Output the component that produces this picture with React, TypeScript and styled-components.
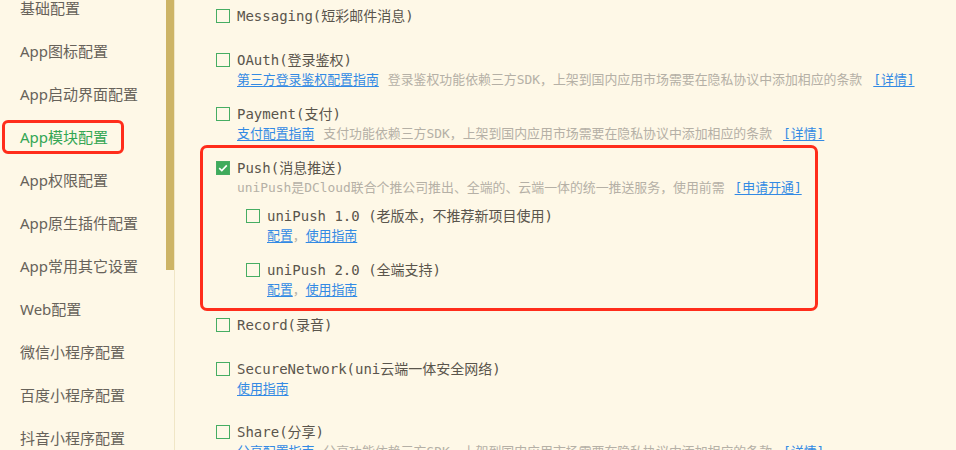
import styled, { createGlobalStyle } from "styled-components";

const GlobalStyle = createGlobalStyle`
  html, body {
    margin: 0;
    padding: 0;
    background: #fef8e7;
  }
  body {
    font-family: "Noto Sans", "Noto Sans CJK SC", sans-serif;
  }
`;

const Page = styled.div`
  display: flex;
  height: 450px;
  overflow: hidden;
  background: #fef8e7;
`;

const Sidebar = styled.nav`
  width: 166px;
  flex-shrink: 0;
  overflow: hidden;
`;

const MenuList = styled.ul`
  list-style: none;
  margin: -14px 0 0;
  padding: 0;
`;

const MenuItem = styled.li`
  height: 43px;
  display: flex;
  align-items: center;
`;

const MenuLabel = styled.span<{ $active?: boolean }>`
  display: inline-flex;
  align-items: center;
  box-sizing: border-box;
  height: 34px;
  margin-left: 2px;
  padding: 0 13px 0 15px;
  border: 3px solid ${(p) => (p.$active ? "#ff2d1b" : "transparent")};
  border-radius: 6px;
  font-size: 15px;
  color: ${(p) => (p.$active ? "#33a653" : "#67625a")};
  white-space: nowrap;
`;

const ScrollTrack = styled.div`
  width: 8px;
  flex-shrink: 0;
  border-right: 1px solid #f0e6c6;
`;

const ScrollThumb = styled.div`
  height: 270px;
  background: #cdb466;
`;

const Content = styled.main`
  flex: 1;
  overflow: hidden;
  padding-left: 41px;
`;

const OptionList = styled.div`
  display: flex;
  flex-direction: column;
  margin-top: 6px;
`;

const Option = styled.div<{ $tight?: boolean; $marked?: boolean }>`
  position: relative;
  display: grid;
  grid-template-columns: 14px 1fr;
  column-gap: 7px;
  align-items: start;
  margin-bottom: ${(p) => (p.$tight ? 15 : 24)}px;

  ${(p) =>
    p.$marked &&
    `
    &::after {
      content: "";
      position: absolute;
      top: -13px;
      bottom: -11px;
      left: -16px;
      width: 618px;
      box-sizing: border-box;
      border: 3px solid #ff2d1b;
      border-radius: 7px;
      pointer-events: none;
    }
  `}
`;

const SubList = styled.div`
  display: flex;
  flex-direction: column;
  gap: 14px;
  margin: 9px 0 0 9px;
`;

const SubOption = styled.div`
  display: grid;
  grid-template-columns: 14px 1fr;
  column-gap: 7px;
  align-items: start;
`;

const Check = styled.span<{ $checked?: boolean }>`
  box-sizing: border-box;
  width: 14px;
  height: 14px;
  margin-top: 3px;
  border: 1px solid #46ad63;
  background: ${(p) => (p.$checked ? "#3fab5c" : "transparent")};
  display: flex;
  align-items: center;
  justify-content: center;
`;

const Body = styled.div`
  min-width: 0;
`;

const Title = styled.div`
  font-family: "DejaVu Sans Mono", "Noto Sans CJK SC", monospace;
  font-size: 14px;
  line-height: 20px;
  color: #5a554c;
  white-space: nowrap;
`;

const Desc = styled.div<{ $line?: number }>`
  font-family: "DejaVu Sans Mono", "Noto Sans CJK SC", monospace;
  font-size: 12.9px;
  line-height: ${(p) => p.$line ?? 19}px;
  color: #b5b0a6;
  white-space: nowrap;
`;

const Link = styled.a<{ $gap?: number }>`
  color: #338ae4;
  text-decoration: underline;
  text-underline-offset: 2px;
  margin-left: ${(p) => p.$gap ?? 0}px;
  cursor: pointer;
`;

const Note = styled.span`
  margin-left: 9px;
`;

const Tick = () => (
  <svg width="10" height="8" viewBox="0 0 10 8">
    <path d="M1.2 4.2 L3.8 6.6 L8.8 1.4" fill="none" stroke="#fff" strokeWidth="1.6" />
  </svg>
);

const menu = [
  "基础配置",
  "App图标配置",
  "App启动界面配置",
  "App模块配置",
  "App权限配置",
  "App原生插件配置",
  "App常用其它设置",
  "Web配置",
  "微信小程序配置",
  "百度小程序配置",
  "抖音小程序配置",
];

const privacy = "上架到国内应用市场需要在隐私协议中添加相应的条款";

export default function App() {
  return (
    <>
      <GlobalStyle />
      <Page>
        <Sidebar>
          <MenuList>
            {menu.map((m) => (
              <MenuItem key={m}>
                <MenuLabel $active={m === "App模块配置"}>{m}</MenuLabel>
              </MenuItem>
            ))}
          </MenuList>
        </Sidebar>
        <ScrollTrack>
          <ScrollThumb />
        </ScrollTrack>

        <Content>
          <OptionList>
            <Option>
              <Check />
              <Body>
                <Title>Messaging(短彩邮件消息)</Title>
              </Body>
            </Option>

            <Option $tight>
              <Check />
              <Body>
                <Title>OAuth(登录鉴权)</Title>
                <Desc>
                  <Link>第三方登录鉴权配置指南</Link>
                  <Note>登录鉴权功能依赖三方SDK，{privacy}</Note>
                  <Link $gap={11}>[详情]</Link>
                </Desc>
              </Body>
            </Option>

            <Option $tight>
              <Check />
              <Body>
                <Title>Payment(支付)</Title>
                <Desc>
                  <Link>支付配置指南</Link>
                  <Note>支付功能依赖三方SDK，{privacy}</Note>
                  <Link $gap={11}>[详情]</Link>
                </Desc>
              </Body>
            </Option>

            <Option $tight $marked>
              <Check $checked>
                <Tick />
              </Check>
              <Body>
                <Title>Push(消息推送)</Title>
                <Desc>
                  uniPush是DCloud联合个推公司推出、全端的、云端一体的统一推送服务，使用前需
                  <Link $gap={10}>[申请开通]</Link>
                </Desc>
                <SubList>
                  <SubOption>
                    <Check />
                    <Body>
                      <Title>uniPush 1.0 (老版本，不推荐新项目使用)</Title>
                      <Desc $line={20}>
                        <Link>配置</Link>，<Link>使用指南</Link>
                      </Desc>
                    </Body>
                  </SubOption>
                  <SubOption>
                    <Check />
                    <Body>
                      <Title>uniPush 2.0 (全端支持)</Title>
                      <Desc $line={20}>
                        <Link>配置</Link>，<Link>使用指南</Link>
                      </Desc>
                    </Body>
                  </SubOption>
                </SubList>
              </Body>
            </Option>

            <Option>
              <Check />
              <Body>
                <Title>Record(录音)</Title>
              </Body>
            </Option>

            <Option>
              <Check />
              <Body>
                <Title>SecureNetwork(uni云端一体安全网络)</Title>
                <Desc>
                  <Link>使用指南</Link>
                </Desc>
              </Body>
            </Option>

            <Option $tight>
              <Check />
              <Body>
                <Title>Share(分享)</Title>
                <Desc>
                  <Link>分享配置指南</Link>
                  <Note>分享功能依赖三方SDK，{privacy}</Note>
                  <Link $gap={11}>[详情]</Link>
                </Desc>
              </Body>
            </Option>
          </OptionList>
        </Content>
      </Page>
    </>
  );
}
